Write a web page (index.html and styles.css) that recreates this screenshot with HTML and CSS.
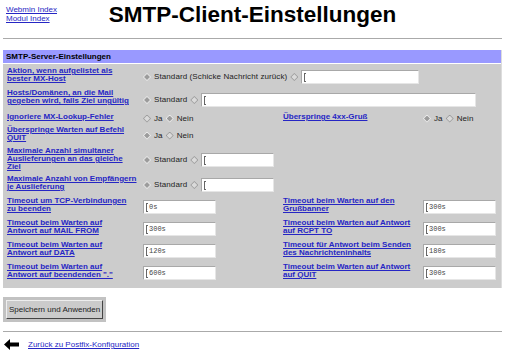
FILE: index.html
```
<!DOCTYPE html>
<html lang="de">

<head>
    <meta charset="UTF-8">
    <title>SMTP-Client-Einstellungen</title>
    <link rel="stylesheet" href="styles.css">
</head>

<body>
    <div id="header">
        <div class="nav">
            <a href="#">Webmin Index</a><br>
            <a href="#">Modul Index</a>
        </div>
        <h1>SMTP-Client-Einstellungen</h1>
        <div></div>
    </div>
    <hr>

    <div id="panel">
        <div class="panel_head">SMTP-Server-Einstellungen</div>
        <div class="opts">
            <!-- row 1 -->
            <div class="lbl"><a href="#">Aktion, wenn aufgelistet als<br>bester MX-Host</a></div>
            <div class="val span3">
                <span class="radio on"></span>Standard (Schicke Nachricht zurück)
                <span class="radio"></span><span class="field w118"><i></i></span>
            </div>

            <!-- row 2 -->
            <div class="lbl"><a href="#">Hosts/Domänen, an die Mail<br>gegeben wird, falls Ziel ungültig</a></div>
            <div class="val span3">
                <span class="radio on"></span>Standard
                <span class="radio"></span><span class="field w275"><i></i></span>
            </div>

            <!-- row 3 -->
            <div class="lbl"><a href="#">Ignoriere MX-Lookup-Fehler</a></div>
            <div class="val">
                <span class="radio"></span>Ja <span class="radio on"></span>Nein
            </div>
            <div class="lbl"><a href="#">Überspringe 4xx-Gruß</a></div>
            <div class="val">
                <span class="radio on"></span>Ja <span class="radio"></span>Nein
            </div>

            <!-- row 4 -->
            <div class="lbl"><a href="#">Überspringe Warten auf Befehl<br>QUIT</a></div>
            <div class="val span3">
                <span class="radio on"></span>Ja <span class="radio"></span>Nein
            </div>

            <!-- row 5 -->
            <div class="lbl"><a href="#">Maximale Anzahl simultaner<br>Auslieferungen an das gleiche<br>Ziel</a></div>
            <div class="val span3">
                <span class="radio on"></span>Standard
                <span class="radio"></span><span class="field"><i></i></span>
            </div>

            <!-- row 6 -->
            <div class="lbl"><a href="#">Maximale Anzahl von Empfängern<br>je Auslieferung</a></div>
            <div class="val span3">
                <span class="radio on"></span>Standard
                <span class="radio"></span><span class="field"><i></i></span>
            </div>

            <!-- timeouts -->
            <div class="lbl"><a href="#">Timeout um TCP-Verbindungen<br>zu beenden</a></div>
            <div class="val"><span class="field"><i></i>0s</span></div>
            <div class="lbl"><a href="#">Timeout beim Warten auf den<br>Grußbanner</a></div>
            <div class="val"><span class="field"><i></i>300s</span></div>

            <div class="lbl"><a href="#">Timeout beim Warten auf<br>Antwort auf MAIL FROM</a></div>
            <div class="val"><span class="field"><i></i>300s</span></div>
            <div class="lbl"><a href="#">Timeout beim Warten auf Antwort<br>auf RCPT TO</a></div>
            <div class="val"><span class="field"><i></i>300s</span></div>

            <div class="lbl"><a href="#">Timeout beim Warten auf<br>Antwort auf DATA</a></div>
            <div class="val"><span class="field"><i></i>120s</span></div>
            <div class="lbl"><a href="#">Timeout für Antwort beim Senden<br>des Nachrichteninhalts</a></div>
            <div class="val"><span class="field"><i></i>180s</span></div>

            <div class="lbl"><a href="#">Timeout beim Warten auf<br>Antwort auf beendenden "."</a></div>
            <div class="val"><span class="field"><i></i>600s</span></div>
            <div class="lbl"><a href="#">Timeout beim Warten auf Antwort<br>auf QUIT</a></div>
            <div class="val"><span class="field"><i></i>300s</span></div>
        </div>
    </div>

    <div class="save">
        <span class="btn_frame"><button type="button">Speichern und Anwenden</button></span>
    </div>
    <hr class="bottom">

    <div class="back">
        <svg width="15" height="11" viewBox="0 0 15 11">
            <polygon points="0,5.5 6,0 6,3.5 15,3.5 15,7.5 6,7.5 6,11" fill="#000" />
        </svg>
        <a href="#">Zurück zu Postfix-Konfiguration</a>
    </div>
</body>

</html>
```

FILE: styles.css
```
* {
    font-family: "Liberation Sans", Arial, sans-serif;
}

body {
    margin: 0;
    padding: 0 4px 0 3px;
    background: #fff;
    color: #000;
    font-size: 8px;
    line-height: 9px;
}

a {
    color: #2626c4;
}

#header {
    display: grid;
    grid-template-columns: 1fr auto 1fr;
    height: 34px;
}

.nav {
    padding: 5px 0 0 3px;
}

h1 {
    margin: 0;
    padding-top: 2px;
    font-size: 22.5px;
    line-height: 26px;
    font-weight: bold;
}

hr {
    border: 0;
    border-top: 1px solid #aaa;
    margin: 4px 0 11px;
}

#panel {
    border-right: 1px solid #ddd;
}

.panel_head {
    background: #9999ff;
    font-weight: bold;
    padding: 2px 3px;
    border-bottom: 1px solid #fff;
}

.opts {
    display: grid;
    grid-template-columns: 136px 140px 140px 1fr;
    grid-template-rows: 22px 24px 13px 21px 28px 22px 22px 22px 22px 22px;
    padding: 1px 2px 5px;
    background: #cccccc;
    line-height: 8px;
}

.lbl {
    padding: 2px 2px 0;
    white-space: nowrap;
}

.lbl a {
    font-weight: bold;
}

.val {
    display: flex;
    align-items: center;
    gap: 3px;
    padding: 2px 2px 0;
    white-space: nowrap;
    letter-spacing: 0.1px;
    color: #222;
}

.span3 {
    grid-column: span 3;
}

/* diamond radio buttons */
.radio {
    position: relative;
    display: inline-block;
    width: 8px;
    height: 8px;
    background: #9a9a9a;
    clip-path: polygon(50% 0, 100% 50%, 50% 100%, 0 50%);
}

.radio::after {
    content: "";
    position: absolute;
    inset: 1px;
    background: #dadada;
    clip-path: polygon(50% 0, 100% 50%, 50% 100%, 0 50%);
}

.radio.on {
    background: #eeeeee;
}

.radio.on::after {
    background: #9c9c9c;
}

.field {
    display: inline-flex;
    align-items: center;
    width: 71px;
    height: 12px;
    background: #fff;
    border: 1px solid;
    border-color: #a8a8a8 #e6e6e6 #e6e6e6 #a8a8a8;
    font-family: "Liberation Mono", monospace;
    font-size: 7px;
    letter-spacing: 0;
    color: #444;
}

.field i {
    display: inline-block;
    width: 1px;
    height: 7px;
    margin: 0 1px 0 2px;
    border: 1px solid #666;
    border-right: 0;
}

.w118 {
    width: 116px;
}

.w275 {
    width: 273px;
}

.save {
    padding: 9px 0 0;
}

.btn_frame {
    display: inline-block;
    padding: 3px;
    background: #c2c2c2;
}

button {
    font-size: 8px;
    height: 19px;
    padding: 0 2px;
    background: #cbcbcb;
    border: 1px solid;
    border-color: #eeeeee #444 #444 #eeeeee;
    color: #222;
}

hr.bottom {
    margin: 9px 0 7px;
}

.back {
    display: flex;
    align-items: center;
    gap: 9px;
    padding-left: 1px;
}
```
